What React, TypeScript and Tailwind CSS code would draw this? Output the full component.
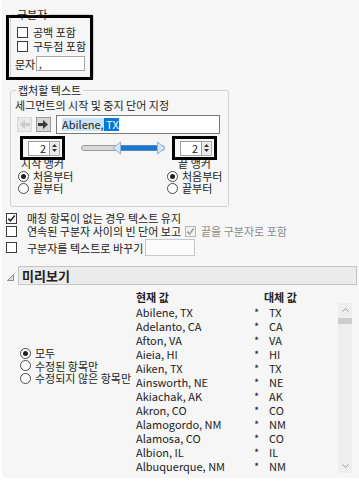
import React from "react";

function Box({ checked = false, disabled = false }: { checked?: boolean; disabled?: boolean }) {
  return (
    <span
      className={
        disabled
          ? "inline-flex w-[11px] h-[11px] shrink-0 items-center justify-center border border-[#b8b8b8] bg-[#f0f0f0]"
          : "inline-flex w-[11px] h-[11px] shrink-0 items-center justify-center border border-[#3c3c3c] bg-white"
      }
    >
      {checked && (
        <svg width="9" height="9" viewBox="0 0 9 9">
          <path d="M1.3 4.6 L3.5 6.8 L7.8 1.6" fill="none" stroke={disabled ? "#a0a0a0" : "#222"} strokeWidth="1.5" />
        </svg>
      )}
    </span>
  );
}

function Radio({ on = false }: { on?: boolean }) {
  return (
    <span className="inline-flex w-[11px] h-[11px] shrink-0 rounded-full border border-[#4a4a4a] bg-white items-center justify-center">
      {on && <span className="w-[5px] h-[5px] rounded-full bg-[#222]" />}
    </span>
  );
}

function Spinner() {
  return (
    <div className="relative z-10 w-[45px] h-[24px] border-[3px] border-black bg-[#f6f6f6] flex items-center pl-[5px]">
      <div className="w-[22px] h-[15px] border border-[#9c9c9c] bg-white flex items-center justify-end pr-[3px] text-[11px]">2</div>
      <div className="w-[10px] h-[15px] border border-l-0 border-[#a8a8a8] bg-[#ececec] flex flex-col items-center justify-center gap-[2px]">
        <svg width="5" height="3" viewBox="0 0 5 3"><path d="M0 3 L2.5 0 L5 3 Z" fill="#333" /></svg>
        <svg width="5" height="3" viewBox="0 0 5 3"><path d="M0 0 L2.5 3 L5 0 Z" fill="#333" /></svg>
      </div>
    </div>
  );
}

const rows: [string, string][] = [
  ["Abilene, TX", "TX"],
  ["Adelanto, CA", "CA"],
  ["Afton, VA", "VA"],
  ["Aieia, HI", "HI"],
  ["Aiken, TX", "TX"],
  ["Ainsworth, NE", "NE"],
  ["Akiachak, AK", "AK"],
  ["Akron, CO", "CO"],
  ["Alamogordo, NM", "NM"],
  ["Alamosa, CO", "CO"],
  ["Albion, IL", "IL"],
  ["Albuquerque, NM", "NM"],
];

export default function App() {
  return (
    <div className="w-[359px] h-[483px] bg-white overflow-hidden font-['Noto_Sans_CJK_KR',sans-serif] text-[#222] text-[11px] leading-[12px]">
      <div className="ml-[2px] w-[357px] h-[478px] bg-[#f6f6f6] flex flex-col">
        {/* 구분자 */}
        <fieldset className="ml-[8px] mt-[8px] w-[83px] border border-[#d2d2d2] rounded-[3px]">
          <legend className="ml-[4px] px-[2px] leading-[12px]">구분자</legend>
          <div className="-ml-[5px] -mt-[5px] -mb-[1px] w-[87px] h-[65px] border-[3px] border-black flex flex-col pl-[8px] pt-[7px]">
            <div className="h-[14px] flex items-center gap-[5px]">
              <Box />
              <span>공백 포함</span>
            </div>
            <div className="h-[14px] flex items-center gap-[5px]">
              <Box />
              <span>구두점 포함</span>
            </div>
            <div className="mt-[3px] -ml-[2px] h-[15px] flex items-center">
              <span className="w-[21px]">문자</span>
              <div className="w-[49px] h-[15px] border border-[#a8a8a8] bg-white pl-[2px] flex items-center text-[10px]">,</div>
            </div>
          </div>
        </fieldset>

        {/* 캡처할 텍스트 */}
        <fieldset className="ml-[8px] mt-[4px] w-[219px] h-[123px] border border-[#d2d2d2] rounded-[3px]">
          <legend className="ml-[5px] px-[2px] leading-[12px]">캡처할 텍스트</legend>
          <div className="mt-[3px] pl-[4px] h-[12px]">세그먼트의 시작 및 중지 단어 지정</div>
          <div className="mt-[4px] h-[19px] flex items-center pl-[6px]">
            <div className="w-[15px] h-[15px] border border-[#d8d8d8] bg-[#e9e9e9] flex items-center justify-center">
              <svg width="11" height="9" viewBox="0 0 11 9"><path d="M11 3 H6 V0 L1 4.5 L6 9 V6 H11 Z" fill="#cacaca" /></svg>
            </div>
            <div className="ml-[4px] w-[15px] h-[15px] border border-[#9a9a9a] bg-[#d6d6d6] flex items-center justify-center">
              <svg width="11" height="9" viewBox="0 0 11 9"><path d="M0 3 H5 V0 L10 4.5 L5 9 V6 H0 Z" fill="#3a3a3a" /></svg>
            </div>
            <div className="ml-[5px] w-[164px] h-[19px] border border-[#7a7a7a] bg-white flex items-center pl-[5px]">
              <span className="bg-[#cce4f7] leading-[13px]">Abilene,</span>
              <span className="bg-[#0078d7] text-white leading-[13px]">&nbsp;TX</span>
            </div>
          </div>
          <div className="mt-[2px] h-[24px] flex items-center">
            <div className="ml-[9px]">
              <Spinner />
            </div>
            <svg className="ml-[16px]" width="86" height="14" viewBox="0 0 86 14">
              <rect x="0.5" y="4.5" width="83" height="5" rx="2.5" fill="#d9d9d9" stroke="#9c9c9c" />
              <rect x="38" y="4.5" width="39" height="5" fill="#1976d2" />
              <path d="M32 7 L39.5 1 L39.5 13 Z" fill="#d4e6f7" stroke="#8fb3d6" />
              <path d="M84 7 L76.5 1 L76.5 13 Z" fill="#d4e6f7" stroke="#8fb3d6" />
            </svg>
            <div className="ml-[5px]">
              <Spinner />
            </div>
          </div>
          <div className="-mt-[3px] h-[12px] flex">
            <div className="ml-[9px] w-[45px] text-center">시작 앵커</div>
            <div className="ml-[107px] w-[45px] text-center">끝 앵커</div>
          </div>
          <div className="mt-[1px] flex">
            <div className="ml-[7px] w-[149px] flex flex-col">
              <div className="h-[12px] flex items-center gap-[4px]"><Radio on /><span>처음부터</span></div>
              <div className="h-[12px] flex items-center gap-[4px]"><Radio /><span>끝부터</span></div>
            </div>
            <div className="flex flex-col">
              <div className="h-[12px] flex items-center gap-[4px]"><Radio on /><span>처음부터</span></div>
              <div className="h-[12px] flex items-center gap-[4px]"><Radio /><span>끝부터</span></div>
            </div>
          </div>
        </fieldset>

        {/* 체크박스들 */}
        <div className="mt-[5px] h-[12px] flex items-center pl-[4px] gap-[10px]">
          <Box checked />
          <span>매칭 항목이 없는 경우 텍스트 유지</span>
        </div>
        <div className="mt-[1px] h-[12px] flex items-center pl-[4px]">
          <Box />
          <span className="ml-[10px]">연속된 구분자 사이의 빈 단어 보고</span>
          <span className="ml-[4px]"><Box checked disabled /></span>
          <span className="ml-[5px] text-[#8c8c8c]">끝을 구분자로 포함</span>
        </div>
        <div className="mt-[2px] h-[17px] flex items-center pl-[4px]">
          <Box />
          <span className="ml-[10px]">구분자를 텍스트로 바꾸기</span>
          <div className="ml-[2px] w-[50px] h-[17px] border border-[#c8c8c8] bg-[#fbfbfb]" />
        </div>

        {/* 미리보기 */}
        <div className="mt-[10px] h-[19px] flex items-center">
          <svg className="ml-[5px] mt-[3px]" width="7" height="7" viewBox="0 0 7 7">
            <path d="M6.5 0.5 L6.5 6.5 L0.5 6.5 Z" fill="#e0e0e0" stroke="#8a8a8a" />
          </svg>
          <div className="ml-[4px] mr-[2px] flex-1 h-[19px] bg-[#ebebeb] border border-[#c6c6c6] flex items-center pl-[3px] text-[13px] font-bold leading-[16px]">
            미리보기
          </div>
        </div>

        <div className="mt-[6px] h-[12px] flex font-bold">
          <span className="ml-[134px] w-[128px]">현재 값</span>
          <span>대체 값</span>
        </div>

        <div className="h-[170px] flex">
          <div className="w-[134px] flex flex-col pl-[18px] pt-[44px]">
            <div className="h-[12.5px] flex items-center gap-[4px]"><Radio on /><span>모두</span></div>
            <div className="h-[12.5px] flex items-center gap-[4px]"><Radio /><span>수정된 항목만</span></div>
            <div className="h-[12.5px] flex items-center gap-[4px]"><Radio /><span>수정되지 않은 항목만</span></div>
          </div>
          <div className="w-[202px] flex flex-col pt-[2px]">
            {rows.map(([a, b]) => (
              <div key={a} className="h-[14px] flex items-center leading-[14px]">
                <span className="w-[118px]">{a}</span>
                <span className="w-[15px]">*</span>
                <span>{b}</span>
              </div>
            ))}
          </div>
          <div className="w-[14px] h-[170px] bg-[#eeeeee] flex flex-col items-center">
            <svg className="mt-[5px]" width="7" height="4" viewBox="0 0 7 4"><path d="M0.5 3.5 L3.5 0.5 L6.5 3.5" fill="none" stroke="#9a9a9a" /></svg>
            <div className="mt-[6px] w-[14px] h-[6px] bg-[#cdcdcd]" />
            <div className="flex-1" />
            <svg className="mb-[5px]" width="7" height="4" viewBox="0 0 7 4"><path d="M0.5 0.5 L3.5 3.5 L6.5 0.5" fill="none" stroke="#9a9a9a" /></svg>
          </div>
        </div>
      </div>
    </div>
  );
}
